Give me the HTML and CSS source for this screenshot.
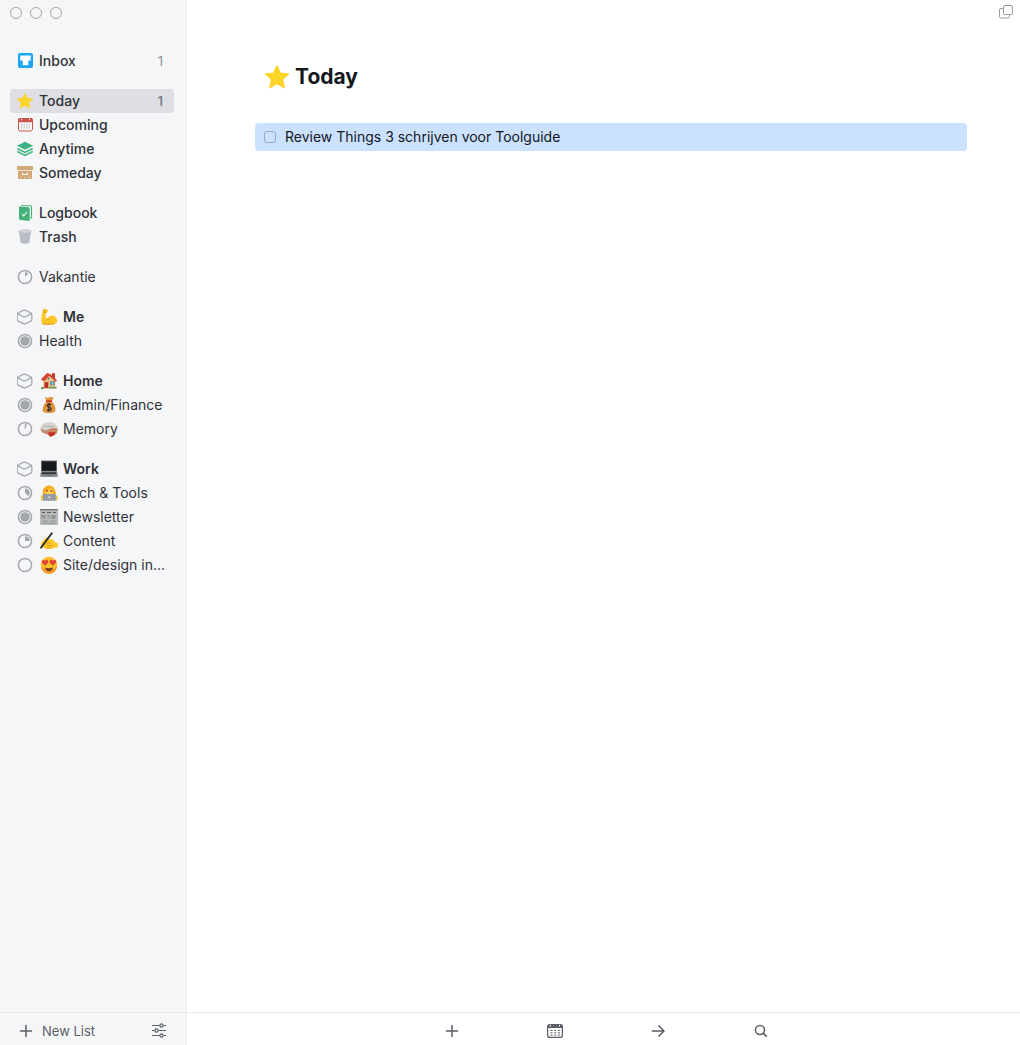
FILE: index.html
```html
<!DOCTYPE html>
<html lang="en">
<head>
    <meta charset="UTF-8">
    <meta name="viewport" content="width=device-width, initial-scale=1.0">
    <title>Today</title>
    <link rel="stylesheet" href="styles.css">
</head>
<body>
    <!-- Shared icons -->
    <svg class="icon-defs" aria-hidden="true">
        <symbol id="star" viewBox="0 0 24 24">
            <path d="M12 .8l3.3 7.4 8.1.8-6.1 5.4 1.9 8.2-7.2-4.2-7.2 4.2 1.9-8.2L.6 9l8.1-.8z" fill="#fdd428" stroke="#fdd428" stroke-width="1.4" stroke-linejoin="round"/>
        </symbol>
        <symbol id="area" viewBox="0 0 16 16">
            <path d="M6.8 1.200Q7.500.8 8.200 1.200L14 4q.8.4.8 1.200v5.600q0 .8-.8 1.200l-5.800 2.800q-.7.4-1.400 0L1 12q-.8-.4-.8-1.200V5.200Q.2 4.400 1 4zM.6 4.800Q3.500 6 5.800 7.500q1.700.9 3.400 0Q11.500 6 14.400 4.800" fill="none" stroke="#a4a7ac" stroke-width="1.300" stroke-linejoin="round"/>
        </symbol>
        <symbol id="ring" viewBox="0 0 16 16">
            <circle cx="8" cy="8" r="6.6" fill="none" stroke="#a4a7ac" stroke-width="1.500"/>
        </symbol>
        <symbol id="plus" viewBox="0 0 14 14">
            <path d="M7 1.500v11M1.500 7h11" fill="none" stroke="#5b5e66" stroke-width="1.500" stroke-linecap="round"/>
        </symbol>
    </svg>

    <div class="window">
        <aside class="sidebar">
            <div class="window-controls">
                <button type="button" aria-label="Close"></button>
                <button type="button" aria-label="Minimize"></button>
                <button type="button" aria-label="Zoom"></button>
            </div>

            <nav class="lists">
                <ul class="group main-lists">
                    <li><a class="item" href="#">
                        <svg class="icon" viewBox="0 0 16 16"><rect x="1" y="0" width="15" height="15" rx="2" fill="#1ba6f5"/><path d="M3.200 2.500h10.600v5h-2.500v4.700H5.700V7.500H3.200z" fill="#fff"/></svg>
                        <span class="name">Inbox</span>
                        <span class="count">1</span>
                    </a></li>
                </ul>

                <ul class="group main-lists">
                    <li><a class="item active" href="#" aria-current="page">
                        <svg class="icon"><use href="#star"/></svg>
                        <span class="name">Today</span>
                        <span class="count">1</span>
                    </a></li>
                    <li><a class="item" href="#">
                        <svg class="icon" viewBox="0 0 16 16"><rect x="1.500" y="1.500" width="14" height="12.500" rx="2" fill="#fafafa" stroke="#c9544a"/><path d="M1 5.200V3.300a2.200 2.200 0 0 1 2.200-2.200h10.600A2.200 2.200 0 0 1 16 3.300v1.900z" fill="#c9544a"/><path d="M4.500 1.800v1.500M12.500 1.800v1.500" stroke="#fff"/><path d="M4.500 6.500v5M7.200 6.500v5M9.800 6.500v5M12.500 6.500v5" stroke="#cfd0d2" stroke-width="1.500" stroke-dasharray="1.400 .4"/></svg>
                        <span class="name">Upcoming</span>
                    </a></li>
                    <li><a class="item" href="#">
                        <svg class="icon" viewBox="0 0 16 16"><path d="M8 .7l8 4-8 4-8-4z" fill="#3fb27f"/><path d="M.3 7.500L8 11.300l7.700-3.800M.3 10.500L8 14.300l7.700-3.800" fill="none" stroke="#3fb27f" stroke-width="1.500"/><path d="M7 3.700h2" stroke="#35a3d2"/></svg>
                        <span class="name">Anytime</span>
                    </a></li>
                    <li><a class="item" href="#">
                        <svg class="icon" viewBox="0 0 16 16"><path d="M0 1h16v4H0zM1 5.800h14V14H1z" fill="#d2a877"/><path d="M5.500 7.700v1.800h5V7.700" fill="none" stroke="#fff" stroke-width="1.100"/><path d="M3 12h1M7 12.700h1M11 11.700h1M13 12.700h1" stroke="#eee0c8"/></svg>
                        <span class="name">Someday</span>
                    </a></li>
                </ul>

                <ul class="group main-lists">
                    <li><a class="item" href="#">
                        <svg class="icon" viewBox="0 0 16 16"><path d="M4 .8h9.500q1 0 1 1V13H13" fill="#fff" stroke="#43b178" stroke-width="1.100"/><path d="M2 1.500l9.500.7q1.200.1 1.200 1.200V16l-9.200-1q-1.500-.2-1.500-1.600z" fill="#43b178"/><path d="M5 9l1.800 2L10 7" fill="none" stroke="#fff" stroke-width="1.100"/></svg>
                        <span class="name">Logbook</span>
                    </a></li>
                    <li><a class="item" href="#">
                        <svg class="icon" viewBox="0 0 16 16"><path d="M2 2.300l1.600 11.500Q8 15.800 12.400 13.800L14 2.300z" fill="#b9bdc6"/><ellipse cx="8" cy="2.600" rx="6" ry="1.700" fill="#d6d8dc" stroke="#b0b4bd" stroke-width=".8"/><path d="M5 9h1M7.500 11h1M10 8h1M6 13h1M10 12.500h1" stroke="#a8bcd4"/></svg>
                        <span class="name">Trash</span>
                    </a></li>
                </ul>

                <ul class="group">
                    <li><a class="item" href="#">
                        <svg class="icon" viewBox="0 0 16 16"><use href="#ring"/><path d="M8 8V3.300A4.700 4.700 0 0 1 11.300 4.700z" fill="#a4a7ac"/></svg>
                        <span class="name">Vakantie</span>
                    </a></li>
                </ul>

                <ul class="group">
                    <li><a class="item area" href="#">
                        <svg class="icon"><use href="#area"/></svg>
                        <svg class="emoji" viewBox="0 0 18 18"><path d="M3 1.200Q5 .3 7.300 1.200l.5 2.500-2 1.500-.2 5Q8 10 9.500 8.400q2.500-1.600 5.200-.1 3 2.200 2.500 5.300-1 3-6 3-6 .5-9.200-.9-1.800-5.200.5-11.200z" fill="#fdc827"/><path d="M3 2.800l2.800-.2M3.200 4.300l3 .4M9.400 11q-2 .1-3.200 1.700M2 15.600q5 1.400 12 .3" fill="none" stroke="#df971c"/></svg>
                        <span class="name">Me</span>
                    </a></li>
                    <li><a class="item" href="#">
                        <svg class="icon" viewBox="0 0 16 16"><use href="#ring"/><circle cx="8" cy="8" r="4.800" fill="#a4a7ac"/></svg>
                        <span class="name">Health</span>
                    </a></li>
                </ul>

                <ul class="group">
                    <li><a class="item area" href="#">
                        <svg class="icon"><use href="#area"/></svg>
                        <svg class="emoji" viewBox="0 0 18 18"><path d="M12 1.200h3V7h-3z" fill="#b3412f"/><path d="M3 8l6-5.500L15.500 8v8.500H3z" fill="#f2d7a0"/><path d="M4 9l5-4.500V16H4z" fill="#e8b87c"/><path d="M.8 7.600L7.200 1l3.500 1.200 6.400 6.300-1.400 1.200L9 4 4 9.200z" fill="#d54436"/><path d="M4.500 10.200h3.700v6H4.500z" fill="#b6312b"/><path d="M10.300 9.300h4v3.800h-4z" fill="#4da9d3" stroke="#80664f" stroke-width=".7"/><path d="M12.300 9.300v3.800" stroke="#d9eef6" stroke-width=".6"/><path d="M1 16h3M8.500 15.700h8" stroke="#719350" stroke-width="1.800"/><circle cx="8.600" cy="6.500" r="1" fill="#497d9c"/></svg>
                        <span class="name">Home</span>
                    </a></li>
                    <li><a class="item" href="#">
                        <svg class="icon" viewBox="0 0 16 16"><use href="#ring"/><circle cx="8" cy="8" r="4.800" fill="#a4a7ac"/></svg>
                        <svg class="emoji" viewBox="0 0 18 18"><path d="M5 1l3 1 2-1.200L13.500 1.700 11.800 5.500q4.400 4.500 3.600 9.200-.8 2.300-6.400 2.300t-6.400-2.300Q2 10.200 6.600 5.500z" fill="#e0943c"/><path d="M6 5.200h6" stroke="#cc3528" stroke-width="1.800"/><path d="M11.300 8.800Q9 7.700 7.400 8.800 6.500 10.500 9 11.200q2.700.7 2 2.400-1.500 1.400-4 .3M9 7v8.700" fill="none" stroke="#39372d" stroke-width="1.300"/></svg>
                        <span class="name">Admin/Finance</span>
                    </a></li>
                    <li><a class="item" href="#">
                        <svg class="icon" viewBox="0 0 16 16"><use href="#ring"/><path d="M8 8V3.200l1.700.3z" fill="#a4a7ac" stroke="#a4a7ac" stroke-width=".5"/></svg>
                        <svg class="emoji" viewBox="0 0 18 18"><path d="M.3 9Q1 2.500 8.500 2q8 .1 9.300 6.500L17 12q-2 1.500-4 3.500-3 2-5-.8L2 12.500z" fill="#d9d6d2"/><path d="M.3 8.500q5 2.500 9 .7 4-2 8.500-.4l-1 4.700-4.500 3q-3 .8-4.500-2l-5.500-2z" fill="#c88762"/><path d="M8 12.500l7.500-.5-1.500 3.200-4 1.300z" fill="#c62f24"/><path d="M3 7l2-1 2 1 2-1 2 .8 3-.6M3 10.800h5" fill="none" stroke="#aaa39d" stroke-width=".8"/></svg>
                        <span class="name">Memory</span>
                    </a></li>
                </ul>

                <ul class="group">
                    <li><a class="item area" href="#">
                        <svg class="icon"><use href="#area"/></svg>
                        <svg class="emoji" viewBox="0 0 18 18"><path d="M1 .5h16v11.300H1z" fill="#65686d"/><path d="M2 1.500h14v9.300H2z" fill="#17191e"/><path d="M1 11.500h16l1 4.500-1 1H1l-1-1z" fill="#8b8e92"/><path d="M2 12.300h14l.5 2H1.500z" fill="#2f3237"/><path d="M6.500 15h5v1h-5z" fill="#6c6f74"/></svg>
                        <span class="name">Work</span>
                    </a></li>
                    <li><a class="item" href="#">
                        <svg class="icon" viewBox="0 0 16 16"><use href="#ring"/><path d="M8 8V3.200a4.800 4.800 0 0 1 3.700 7.900z" fill="#a4a7ac"/></svg>
                        <svg class="emoji" viewBox="0 0 18 18"><path d="M2.800 13Q1.500 2 8.500 1.500q8-.5 7.300 11.500z" fill="#f6a91f"/><path d="M4.800 6.500q4 0 6-2.500 2.600 1.500 2.600 4-1 3.500-4.400 3.500-3.700 0-4.200-5z" fill="#fdd14b"/><path d="M5.800 6.800h2M10.300 6.800h2" stroke="#c3372b" stroke-width="1.400"/><path d="M1 11.500h2v5H1zM15.500 11.500h2v5h-2z" fill="#f2bd35"/><path d="M3 10h12.800v6.800H3z" fill="#959ba5"/><circle cx="9.400" cy="13.200" r="1" fill="#e8eaee"/></svg>
                        <span class="name">Tech &amp; Tools</span>
                    </a></li>
                    <li><a class="item" href="#">
                        <svg class="icon" viewBox="0 0 16 16"><use href="#ring"/><circle cx="8" cy="8" r="4.800" fill="#a4a7ac"/></svg>
                        <svg class="emoji" viewBox="0 0 18 18"><path d="M0 1h18v16H0z" fill="#b8babb"/><path d="M0 1.700h18" stroke="#77797b" stroke-width="1.400"/><path d="M2 4.500h3M7 4.500h4M13 4.500h3" stroke="#5a5d60" stroke-width="1.200"/><path d="M1.500 7h4v3.500h-4zM11.500 7h4v4h-4z" fill="#929496"/><path d="M7 7.500h3.500M7 9.500h3.500M2 13h6M10 13h6M2 15.200h14" stroke="#8c8f91" stroke-width=".8"/></svg>
                        <span class="name">Newsletter</span>
                    </a></li>
                    <li><a class="item" href="#">
                        <svg class="icon" viewBox="0 0 16 16"><use href="#ring"/><path d="M8 8V3.200A4.800 4.800 0 0 1 12.800 8z" fill="#a4a7ac"/></svg>
                        <svg class="emoji" viewBox="0 0 18 18"><path d="M1 11l5-5.500Q8 4.800 9 7l4.500.8 1.500 2.700 3 .8v4l-3.500.5-4 1.200-5.500-.5-3.500-2z" fill="#fdc727"/><path d="M6 11.200h5M7 13.500h6M6 15.800h5" stroke="#e09a20" stroke-width=".9"/><path d="M11.800 1.300L1 15.800" stroke="#25262a" stroke-width="1.800" stroke-linecap="round"/></svg>
                        <span class="name">Content</span>
                    </a></li>
                    <li><a class="item" href="#">
                        <svg class="icon"><use href="#ring"/></svg>
                        <svg class="emoji" viewBox="0 0 18 18"><circle cx="9" cy="9" r="8.200" fill="#fdbf2d"/><path d="M1 10a8 8 0 0 0 16 0q-8 8-16 0z" fill="#f39b28"/><path d="M5.200 9.700L1.900 6.500q-.7-2.200 1.200-2.600 1.200-.1 1.900 1Q6.200 3.300 7.500 4q1.500 1.100.5 2.700zM12.800 9.700L9.800 6.700Q9 5 10.500 4q1.300-.7 2.500.9.900-1.400 2.100-1 1.800.8 1 2.700z" fill="#e34335"/><path d="M5 11.500q4 1.500 8 0-1 3.800-4 3.800t-4-3.800z" fill="#713b23"/></svg>
                        <span class="name">Site/design in...</span>
                    </a></li>
                </ul>
            </nav>

            <footer class="sidebar-footer">
                <button type="button" class="new-list">
                    <svg class="icon-small"><use href="#plus"/></svg>
                    <span>New List</span>
                </button>
                <button type="button" aria-label="Settings">
                    <svg class="icon" viewBox="0 0 16 16" fill="none" stroke="#5b5e66" stroke-width="1.200"><path d="M1 2.500h7.500M12.500 2.500H15M1 7.500h2.500M7.500 7.500H15M1 12.500h7.500M12.500 12.500H15"/><circle cx="10.500" cy="2.500" r="1.600"/><circle cx="5.500" cy="7.500" r="1.600"/><circle cx="10.500" cy="12.500" r="1.600"/></svg>
                </button>
            </footer>
        </aside>

        <main class="content">
            <header class="content-top">
                <button type="button" aria-label="Open in new window">
                    <svg class="icon-small" viewBox="0 0 14 14" fill="none" stroke="#999ba1" stroke-width="1"><rect x="4.500" y=".5" width="9" height="9" rx="1.500"/><path d="M4.500 3.500H2Q.5 3.500 .5 5v6.500Q.5 13 2 13h7q1.500 0 1.500-1.500v-2"/></svg>
                </button>
            </header>

            <section class="today">
                <h1><svg class="title-icon"><use href="#star"/></svg>Today</h1>
                <ul class="tasks">
                    <li class="task selected">
                        <input type="checkbox" id="task-1">
                        <label for="task-1">Review Things 3 schrijven voor Toolguide</label>
                    </li>
                </ul>
            </section>

            <footer class="toolbar">
                <button type="button" aria-label="New to-do">
                    <svg class="icon-small"><use href="#plus"/></svg>
                </button>
                <button type="button" aria-label="When">
                    <svg class="icon" viewBox="0 0 16 16"><rect x=".6" y="1.600" width="14.800" height="12.800" rx="2.200" fill="none" stroke="#5b5e66" stroke-width="1.200"/><path d="M.6 5V3.200q0-1.800 1.800-1.800h11.200q1.800 0 1.800 1.800V5z" fill="#5b5e66"/><path d="M3.500 1.800v1.700M12.500 1.800v1.700" stroke="#fff"/><path d="M3.500 7.500h9.500M3.500 9.800h9.500M3.500 12.100h9.500" stroke="#5b5e66" stroke-width="1" stroke-dasharray="2 1.700"/></svg>
                </button>
                <button type="button" aria-label="Move">
                    <svg class="icon-small" viewBox="0 0 14 14"><path d="M.8 7h12M7.500 1.500L13 7l-5.500 5.500" fill="none" stroke="#5b5e66" stroke-width="1.500"/></svg>
                </button>
                <button type="button" aria-label="Search">
                    <svg class="icon-small" viewBox="0 0 14 14"><circle cx="6" cy="6" r="4.500" fill="none" stroke="#5b5e66" stroke-width="1.500"/><path d="M9.200 9.200l3.500 3.500" stroke="#5b5e66" stroke-width="1.700"/></svg>
                </button>
            </footer>
        </main>
    </div>
</body>
</html>
```
FILE: styles.css
```css
* {
    box-sizing: border-box;
}

body {
    margin: 0;
    font-family: Inter, "Liberation Sans", sans-serif;
    font-size: 14px;
    line-height: 24px;
    color: #303238;
    background: #fff;
}

ul {
    list-style: none;
    margin: 0;
    padding: 0;
}

button {
    display: flex;
    align-items: center;
    justify-content: center;
    padding: 0;
    border: none;
    background: none;
    font: inherit;
    color: inherit;
    cursor: pointer;
}

svg {
    display: block;
    flex-shrink: 0;
}

.icon-defs {
    position: absolute;
    width: 0;
    height: 0;
}

.icon {
    width: 16px;
    height: 16px;
}

.icon-small {
    width: 14px;
    height: 14px;
}

.window {
    display: flex;
    min-height: 100vh;
}

/* Sidebar */
.sidebar {
    display: flex;
    flex-direction: column;
    flex: 0 0 187px;
    min-width: 0;
    background: #f5f6f8;
    border-right: 1px solid #eceef0;
}

.window-controls {
    display: flex;
    gap: 8px;
    padding: 7px 10px;
}

.window-controls button {
    width: 12px;
    height: 12px;
    border: 1px solid #a3a4a7;
    border-radius: 50%;
}

.lists {
    display: flex;
    flex-direction: column;
    flex: 1;
    gap: 16px;
    padding: 23px 12px 16px 10px;
}

.item {
    display: flex;
    align-items: center;
    height: 24px;
    padding: 0 7px;
    gap: 6px;
    border-radius: 4px;
    color: inherit;
    text-decoration: none;
}

.item.active {
    background: #dddfe4;
}

.main-lists .name {
    font-weight: 500;
}

.area .name {
    font-weight: 600;
}

.name {
    flex: 1;
    min-width: 0;
    overflow: hidden;
    text-overflow: ellipsis;
    white-space: nowrap;
}

.count {
    padding-right: 4px;
    font-size: 13px;
    color: #909298;
}

.active .count {
    font-weight: 600;
    color: #7d8086;
}

.emoji {
    width: 18px;
    height: 18px;
    margin: 0 -1px 0 1px;
}

.sidebar-footer {
    display: flex;
    align-items: center;
    justify-content: space-between;
    height: 33px;
    padding: 3px 19px 0;
    border-top: 1px solid #e4e6e8;
    font-size: 13px;
    color: #5b5e66;
}

.new-list {
    gap: 9px;
}

/* Content */
.content {
    display: flex;
    flex-direction: column;
    flex: 1;
    min-width: 0;
}

.content-top {
    display: flex;
    justify-content: flex-end;
    padding: 5px 7px;
}

.today {
    flex: 1;
    padding: 37px 53px 0 68px;
}

h1 {
    display: flex;
    align-items: center;
    gap: 6px;
    margin: 0 0 30px;
    padding-left: 10px;
    font-size: 21px;
    font-weight: 700;
    line-height: 32px;
    color: #14171c;
}

.title-icon {
    width: 24px;
    height: 24px;
}

.task {
    display: flex;
    align-items: center;
    gap: 9px;
    height: 28px;
    padding: 0 9px;
    border-radius: 4px;
    color: #14171c;
}

.task.selected {
    background: #cae1ff;
}

.task input {
    appearance: none;
    width: 12px;
    height: 12px;
    margin: 0;
    border: 1px solid #9ba8b9;
    border-radius: 3px;
}

.task input:checked {
    background: #2a7de1;
}

.toolbar {
    display: flex;
    align-items: center;
    justify-content: center;
    gap: 79px;
    height: 33px;
    padding: 4px 0 0 6px;
    border-top: 1px solid #ececee;
}

.toolbar button {
    width: 24px;
    height: 24px;
}
```
